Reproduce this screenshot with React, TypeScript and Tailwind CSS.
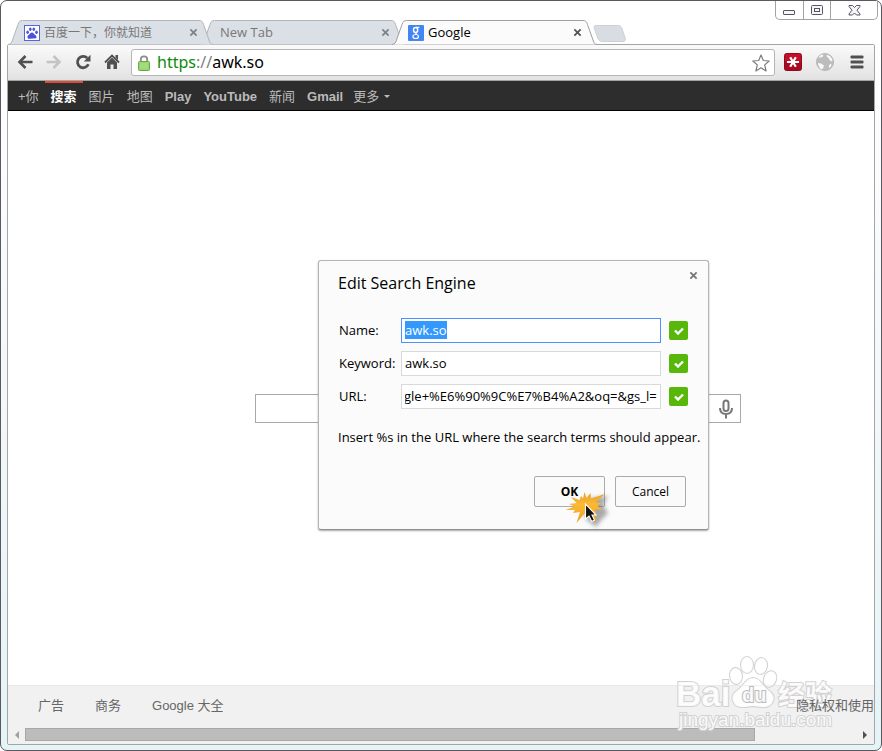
import { useEffect, useRef } from "react";
import type { ReactNode } from "react";

const TABS = [
  { title: "百度一下，你就知道", icon: "baidu", active: false },
  { title: "New Tab", icon: "", active: false },
  { title: "Google", icon: "google", active: true },
];

const NAV_LINKS = [
  { label: "+你", active: false },
  { label: "搜索", active: true },
  { label: "图片", active: false },
  { label: "地图", active: false },
  { label: "Play", active: false },
  { label: "YouTube", active: false },
  { label: "新闻", active: false },
  { label: "Gmail", active: false },
];

const FIELDS = [
  { id: "name", label: "Name:", value: "awk.so" },
  { id: "keyword", label: "Keyword:", value: "awk.so" },
  { id: "url", label: "URL:", value: "gle+%E6%90%9C%E7%B4%A2&oq=&gs_l=" },
];

function CloseIcon({ className = "" }: { className?: string }) {
  return (
    <svg viewBox="0 0 10 10" className={className} fill="none" stroke="currentColor" strokeWidth="2">
      <path d="M1.5 1.5l7 7M8.5 1.5l-7 7" />
    </svg>
  );
}

function BaiduIcon() {
  return (
    <svg viewBox="0 0 16 16" className="h-4 w-4 shrink-0">
      <rect x="0.5" y="0.5" width="15" height="15" fill="#fff" stroke="#5a62e0" />
      <g fill="#4a52dc">
        <ellipse cx="3.6" cy="7.2" rx="1.3" ry="1.7" />
        <ellipse cx="6.3" cy="4.2" rx="1.3" ry="1.8" />
        <ellipse cx="9.8" cy="4.2" rx="1.3" ry="1.8" />
        <ellipse cx="12.5" cy="7.2" rx="1.3" ry="1.7" />
        <path d="M8 7.500c-1.500 0-2 1.500-3 2.300S3.300 11 3.500 12.500 5 13.800 8 13.500s4.300.3 4.500-1-.5-2-1.500-2.700S9.500 7.500 8 7.500z" />
      </g>
    </svg>
  );
}

function GoogleIcon() {
  return (
    <svg viewBox="0 0 16 16" className="h-4 w-4 shrink-0">
      <rect width="16" height="16" rx="1" fill="#4285f4" />
      <g fill="none" stroke="#fff">
        <ellipse cx="7.6" cy="5" rx="2.1" ry="2.5" strokeWidth="1.4" />
        <path d="M8 2.400h3.300M8.600 7.300c-1.400.9-.6 1.500.4 2.200" strokeWidth="1.1" />
        <ellipse cx="7.7" cy="11.5" rx="2.8" ry="2" strokeWidth="1.2" />
      </g>
    </svg>
  );
}

function Tab({ title, icon, active }: (typeof TABS)[number]) {
  return (
    <div className={`relative -mr-[13px] flex h-[25px] w-[205px] shrink-0 items-center px-[15px] ${active ? "z-20" : icon ? "z-10" : ""}`}>
      <svg viewBox="0 0 205 25" className="absolute inset-0 h-full w-full">
        <path
          d="M0 24.500C3 24 3.500 23 4.500 20L10 4.500C11 1.500 12 .5 14.500 .5H191C193.500 .5 194.500 1.500 195.500 4.500L201 20C202 23 202.500 24 205 24.500"
          fill={active ? "#fbfbfb" : "#dbe0e7"}
          stroke={active ? "#a0a0a0" : "#b2b5b8"}
        />
      </svg>
      <button className={`relative flex min-w-0 flex-1 items-center gap-1 pl-px text-left leading-4 ${active ? "text-black" : "text-[#777]"}`}>
        {icon === "baidu" && <BaiduIcon />}
        {icon === "google" && <GoogleIcon />}
        <span className={icon === "baidu" ? "text-xs" : icon ? "pb-px text-[13px]" : "pb-px pl-1 text-[13px]"}>{title}</span>
      </button>
      <button aria-label={`Close ${title}`} className="relative">
        <CloseIcon className={active ? "h-[9px] w-[9px] text-[#555]" : "h-[9px] w-[9px] text-[#808489]"} />
      </button>
    </div>
  );
}

function WindowControls() {
  return (
    <div className="-mr-[3px] ml-auto flex h-[19px] shrink-0 self-start rounded-b-[5px] border border-t-0 border-[#a2a2a2] bg-white/60">
      <button aria-label="Minimize" className="flex w-7 items-center justify-center border-r border-[#a2a2a2]">
        <svg viewBox="0 0 13 13" className="h-[13px] w-[13px]">
          <rect x="0.5" y="6.5" width="11" height="4" rx="0.5" fill="#f6f6f6" stroke="#555566" />
        </svg>
      </button>
      <button aria-label="Maximize" className="flex w-[27px] items-center justify-center border-r border-[#a2a2a2]">
        <svg viewBox="0 0 13 11" className="h-[11px] w-[13px]" fill="#f6f6f6" stroke="#555566">
          <rect x="0.5" y="0.5" width="11" height="9" rx="1" />
          <rect x="3.5" y="3.5" width="5" height="3" />
        </svg>
      </button>
      <button aria-label="Close window" className="flex w-[46px] items-center justify-center">
        <svg viewBox="0 0 13 11" className="h-[11px] w-[13px]">
          <path
            d="M1 .5h3.500L6.500 2.500 8.500.5H12v1L9 5.200l3 3.800v1H8.500L6.500 8 4.500 10H1V9l3-3.800L1 1.500z"
            fill="#f6f6f6"
            stroke="#555566"
            strokeLinejoin="round"
          />
        </svg>
      </button>
    </div>
  );
}

function ToolButton({ label, wide = false, children }: { label: string; wide?: boolean; children: ReactNode }) {
  return (
    <button aria-label={label} className={`flex h-7 shrink-0 items-center justify-center pb-0.5 ${wide ? "w-8" : "w-[29px]"}`}>
      {children}
    </button>
  );
}

function Toolbar() {
  return (
    <div className="flex h-9 items-center border-b border-[#a5a5a5] bg-gradient-to-b from-[#fafafa] to-[#e2e2e2] pl-0.5">
      <ToolButton label="Back">
        <svg viewBox="0 0 16 16" className="h-4 w-4" fill="none" stroke="#505050" strokeWidth="2.6">
          <path d="M15.500 8H3M8.500 2L2.500 8l6 6" />
        </svg>
      </ToolButton>
      <ToolButton label="Forward">
        <svg viewBox="0 0 16 16" className="h-4 w-4" fill="none" stroke="#c4c4c4" strokeWidth="2.6">
          <path d="M.5 8H13M7.500 2l6 6-6 6" />
        </svg>
      </ToolButton>
      <ToolButton label="Reload">
        <svg viewBox="0 0 16 16" className="h-4 w-4">
          <path d="M12.200 4A5.700 5.700 0 1 0 13.400 10.300" fill="none" stroke="#505050" strokeWidth="2.8" />
          <path d="M15.500.8V7.500H8.800z" fill="#505050" />
        </svg>
      </ToolButton>
      <ToolButton label="Home">
        <svg viewBox="0 0 16 16" className="h-4 w-4">
          <path d="M1 8.500L8 1.500l7 7" fill="none" stroke="#505050" strokeWidth="1.8" />
          <path d="M11.500 1H14v5l-2.500-2.500zM3 8.500l5-5 5 5V15H9.500v-4.500h-3V15H3z" fill="#505050" />
        </svg>
      </ToolButton>

      <div className="ml-[5px] flex h-[27px] min-w-0 flex-1 items-center rounded-[3px] border border-[#b5b5b5] bg-white pr-1 pl-1.5">
        <svg viewBox="0 0 12 16" className="h-4 w-3 shrink-0">
          <path d="M2.800 8V4.500a3.200 3.200 0 0 1 6.400 0V8" fill="none" stroke="#8c8c8c" strokeWidth="1.8" />
          <rect x="0.5" y="6.5" width="11" height="9" rx="1" fill="#93d46c" stroke="#6aa84a" />
          <path d="M2 9h8M2 11h8M2 13h8" stroke="#b5e697" strokeWidth="0.8" />
        </svg>
        <a href="https://awk.so" className="ml-[7px] flex-1 pb-0.5 font-['Noto_Sans',sans-serif] text-base leading-5 text-black">
          <span className="text-[#0b8a0b]">https</span>
          <span className="text-[#808080]">://</span>awk.so
        </a>
        <button aria-label="Bookmark this page">
          <svg viewBox="0 0 18 18" className="h-[18px] w-[18px]" fill="#fff" stroke="#7c7c7c" strokeWidth="1.2" strokeLinejoin="round">
            <path d="M9 1l2.300 5.500 5.900.5-4.500 3.900L14.100 17 9 13.800 3.900 17l1.400-6.100L.8 7l5.900-.5z" />
          </svg>
        </button>
      </div>

      <div className="ml-0.5 flex pr-px">
        <ToolButton label="LastPass" wide>
          <svg viewBox="0 0 18 18" className="h-[18px] w-[18px]">
            <rect x="0.5" y="0.5" width="17" height="17" rx="2" fill="#c3102a" stroke="#8f0a1c" />
            <path d="M1 9.500h16V16a1 1 0 0 1-1 1H2a1 1 0 0 1-1-1z" fill="#96081c" opacity="0.6" />
            <path d="M3 9h12M6.200 4.200l5.600 9.600M11.800 4.200L6.200 13.800" stroke="#fff" strokeWidth="2.2" />
          </svg>
        </ToolButton>
        <ToolButton label="Proxy" wide>
          <svg viewBox="0 0 18 18" className="h-[18px] w-[18px]">
            <circle cx="9" cy="9" r="8.6" fill="#bcbcbc" stroke="#a8a8a8" strokeWidth="0.6" />
            <path
              d="M2.500 4.500C3.500 3 5 1.800 6.500 1.500l1 1.500L5 4.500zM10.500 1.800l3.500 1.200L16.500 6.500l-.5 2-2-1-1.500-2.500-1.500-1zM2 10l3 .5 3 2-1 3-1.500 1C3.500 15 2.200 13 2 10zM13 12l2.500-1.500-.5 3-2 1.500z"
              fill="#f8f8f8"
            />
          </svg>
        </ToolButton>
        <ToolButton label="Menu" wide>
          <svg viewBox="0 0 14 14" className="h-3.5 w-3.5" fill="#505050">
            <rect x="0.5" y="0.5" width="13" height="3" rx="1" />
            <rect x="0.5" y="5.5" width="13" height="3" rx="1" />
            <rect x="0.5" y="10.5" width="13" height="3" rx="1" />
          </svg>
        </ToolButton>
      </div>
    </div>
  );
}

function NavBar() {
  return (
    <nav className="flex h-[30px] shrink-0 border-b border-black bg-[#2d2d2d] pl-1 font-['Liberation_Sans','Noto_Sans_CJK_SC',sans-serif] text-[13px] leading-7">
      {NAV_LINKS.map((link) => (
        <a
          key={link.label}
          href="#"
          className={`border-t-2 px-1.5 font-bold ${link.active ? "border-[#dd4b39] text-white" : "border-transparent text-[#bbb]"}`}
        >
          <span className={/[a-z]/.test(link.label) || link.active ? "" : "font-normal"}>{link.label}</span>
        </a>
      ))}
      <a href="#" className="flex items-center gap-[5px] border-t-2 border-transparent px-1 text-[#bbb]">
        更多
        <svg viewBox="0 0 6 3" className="h-[3px] w-1.5" fill="#bbb">
          <path d="M0 0h6L3 3z" />
        </svg>
      </a>
    </nav>
  );
}

function ClickBurst() {
  return (
    <svg viewBox="0 0 50 40" className="pointer-events-none absolute top-3.5 left-[30px] h-10 w-[50px] overflow-visible">
      <defs>
        <linearGradient id="burst" x1="0" y1="0" x2="0" y2="1">
          <stop offset="0" stopColor="#e3a22c" />
          <stop offset="0.4" stopColor="#fdb933" />
          <stop offset="1" stopColor="#eca01e" />
        </linearGradient>
        <filter id="soft" x="-40%" y="-40%" width="180%" height="180%">
          <feGaussianBlur stdDeviation="2" />
        </filter>
      </defs>
      <path d="M18 10l12-2 14-2-5 9 5 8-6 6-6 8-10-8z" fill="#666" opacity="0.55" filter="url(#soft)" />
      <path
        d="M7 7l8.500 3 1.500-4 2 2.500L20.500 2l2 6 4-5 .5 5.500L41 4l-9.500 8.500 6 .5-4.500 2.500 5.500 4.500-7-1 .5 13.500L26 26l-5-3-8.500 10 3.500-11-7 1 2-3L1.500 20l9-3.500L5 14l7.500-1z"
        fill="url(#burst)"
      />
      <path d="M21.500 14v15l3.500-3 2.800 5.500 2.700-1.500-2.500-5H32z" fill="#111" stroke="#fff" strokeWidth="1.1" />
    </svg>
  );
}

function EditDialog() {
  const nameRef = useRef<HTMLInputElement>(null);
  const urlRef = useRef<HTMLInputElement>(null);

  useEffect(() => {
    if (urlRef.current) urlRef.current.scrollLeft = urlRef.current.scrollWidth;
    nameRef.current?.focus();
    nameRef.current?.select();
  }, []);

  return (
    <div
      role="dialog"
      aria-labelledby="dialog-title"
      className="absolute top-[149px] left-[310px] w-[391px] rounded-[3px] border border-[#b5b5b5] border-b-[#8f8f8f] bg-[#fbfbfb] px-[19px] pt-3 pb-[22px] shadow-[0_1px_2px_rgba(0,0,0,0.35)]"
    >
      <button aria-label="Close dialog" className="absolute top-2.5 right-2.5">
        <CloseIcon className="h-[9px] w-[9px] text-[#777]" />
      </button>
      <h1 id="dialog-title" className="text-base leading-5">
        Edit Search Engine
      </h1>
      <form onSubmit={(e) => e.preventDefault()}>
        <div className="mt-[25px] mr-px flex flex-col gap-2">
          {FIELDS.map((field) => (
            <div key={field.id} className="flex items-center">
              <label htmlFor={field.id} className="w-[63px] pl-px text-[13px]">
                {field.label}
              </label>
              <input
                id={field.id}
                ref={field.id === "name" ? nameRef : field.id === "url" ? urlRef : undefined}
                defaultValue={field.value}
                className="h-[25px] min-w-0 flex-1 border border-[#d9d9d9] bg-white px-[3px] pb-px text-[13px] outline-none selection:bg-[#3399ff] selection:text-white focus:border-[#4d90fe]"
              />
              <span className="ml-2 flex h-[19px] w-[19px] items-center justify-center rounded-[2px] bg-[#58b70b]">
                <svg viewBox="0 0 10 8" className="h-2 w-2.5" fill="none" stroke="#fff" strokeWidth="2.4">
                  <path d="M1 3.500l3 3L9 1.500" />
                </svg>
              </span>
            </div>
          ))}
        </div>
        <p className="mt-[18px] text-[13px] leading-5 whitespace-nowrap">
          Insert %s in the URL where the search terms should appear.
        </p>
        <div className="mt-[29px] mr-[3px] flex justify-end gap-2.5">
          <div className="relative">
            <button type="submit" className="h-[31px] w-[71px] rounded-[2px] border border-[#aaa] bg-[#fafafa] text-xs font-bold">
              OK
            </button>
            <ClickBurst />
          </div>
          <button type="button" className="h-[31px] w-[71px] rounded-[2px] border border-[#aaa] bg-[#fafafa] text-xs">
            Cancel
          </button>
        </div>
      </form>
    </div>
  );
}

function Watermark() {
  return (
    <svg viewBox="0 0 164 84" className="pointer-events-none absolute right-9 bottom-2.5 h-[84px] w-[164px]">
      <g fill="#fff" fillOpacity="0.9" stroke="#d2d2d2" strokeWidth="2" paintOrder="stroke">
        <ellipse cx="62" cy="26" rx="6" ry="8" transform="rotate(-8 62 26)" />
        <ellipse cx="73" cy="15" rx="6" ry="8" />
        <ellipse cx="87" cy="16" rx="6" ry="8" transform="rotate(10 87 16)" />
        <ellipse cx="96" cy="29" rx="6" ry="8" transform="rotate(20 96 29)" />
        <path d="M79 28c-7 0-9 7-14 11s-8 7-6 12c3 8 10 6 20 5 10 1 17 3 20-5 2-5-1-8-6-12S86 28 79 28z" />
        <text x="2" y="56" fontFamily="Liberation Sans, sans-serif" fontSize="35" fontWeight="700">Bai</text>
        <text x="68" y="52" fontFamily="Liberation Sans, sans-serif" fontSize="20" fontWeight="700" stroke="#bbb">du</text>
        <text x="104" y="55" fontFamily="Noto Sans CJK SC, sans-serif" fontSize="27" fontWeight="700">经验</text>
        <text x="5" y="76" fontFamily="Liberation Sans, sans-serif" fontSize="19">jingyan.baidu.com</text>
      </g>
    </svg>
  );
}

export default function App() {
  return (
    <div className="flex min-h-screen flex-col rounded-[7px] border border-[#5b5860] bg-gradient-to-b from-white via-[#f4f8fa] to-[#e4f4f7] px-1.5 pb-[5px] font-['Open_Sans','Noto_Sans_CJK_SC',sans-serif]">
      <header className="relative z-10 -mb-px flex h-11 items-end pl-px">
        {TABS.map((tab) => (
          <Tab key={tab.title} {...tab} />
        ))}
        <button aria-label="New tab" className="mb-[3px] ml-[9px] shrink-0">
          <svg viewBox="0 0 33 17" className="h-[17px] w-[33px]">
            <path d="M3 .5h22c2 0 3 1 4 3l3 9c1 2.500 0 4-2 4H9c-2 0-3-1-4-3L1.500 4C.5 2 1 .5 3 .5z" fill="#d8dde3" stroke="#cdd1d6" />
          </svg>
        </button>
        <WindowControls />
      </header>

      <div className="flex flex-1 flex-col overflow-hidden rounded-[2px] border border-[#a5a5a5] bg-white">
        <Toolbar />
        <NavBar />

        <main className="relative flex-1 overflow-hidden">
          <div className="flex w-[980px] justify-center pt-[283px]">
            <form className="flex h-[29px] w-[486px] border border-[#a9a9a9]">
              <input aria-label="Search" className="min-w-0 flex-1 outline-none" />
              <button type="button" aria-label="Search by voice" className="flex w-[29px] items-center justify-center">
                <svg viewBox="0 0 14 20" className="h-5 w-3.5" fill="none" stroke="#777" strokeWidth="2">
                  <rect x="4.5" y="1.5" width="5" height="10.5" rx="2.5" />
                  <path d="M1 9c0 4 2.500 6 6 6s6-2 6-6M7 15v4.500" />
                </svg>
              </button>
            </form>
          </div>
          <EditDialog />
        </main>

        <footer className="relative bg-[#f1f1f1]">
          <Watermark />
          <div className="relative flex h-[41px] items-center gap-[31px] overflow-hidden border-t border-[#e4e4e4]/60 pl-[30px] font-['Liberation_Sans','Noto_Sans_CJK_SC',sans-serif] text-[13px] whitespace-nowrap text-[#666]">
            <a href="#">广告</a>
            <a href="#">商务</a>
            <a href="#">Google 大全</a>
            <a href="#" className="ml-auto">隐私权和使用</a>
          </div>
          <div className="flex h-[18px] items-center pb-px">
            <button aria-label="Scroll left" className="flex w-[17px] justify-center">
              <svg viewBox="0 0 4 8" className="h-2 w-1" fill="#a0a0a0">
                <path d="M4 0v8L0 4z" />
              </svg>
            </button>
            <div className="flex-1">
              <div className="h-[13px] w-[88%] border border-[#a8a8a8] bg-[#bcbcbc]" />
            </div>
            <button aria-label="Scroll right" className="flex w-[19px] justify-center">
              <svg viewBox="0 0 4 8" className="h-2 w-1" fill="#505050">
                <path d="M0 0v8l4-4z" />
              </svg>
            </button>
          </div>
        </footer>
      </div>
    </div>
  );
}
